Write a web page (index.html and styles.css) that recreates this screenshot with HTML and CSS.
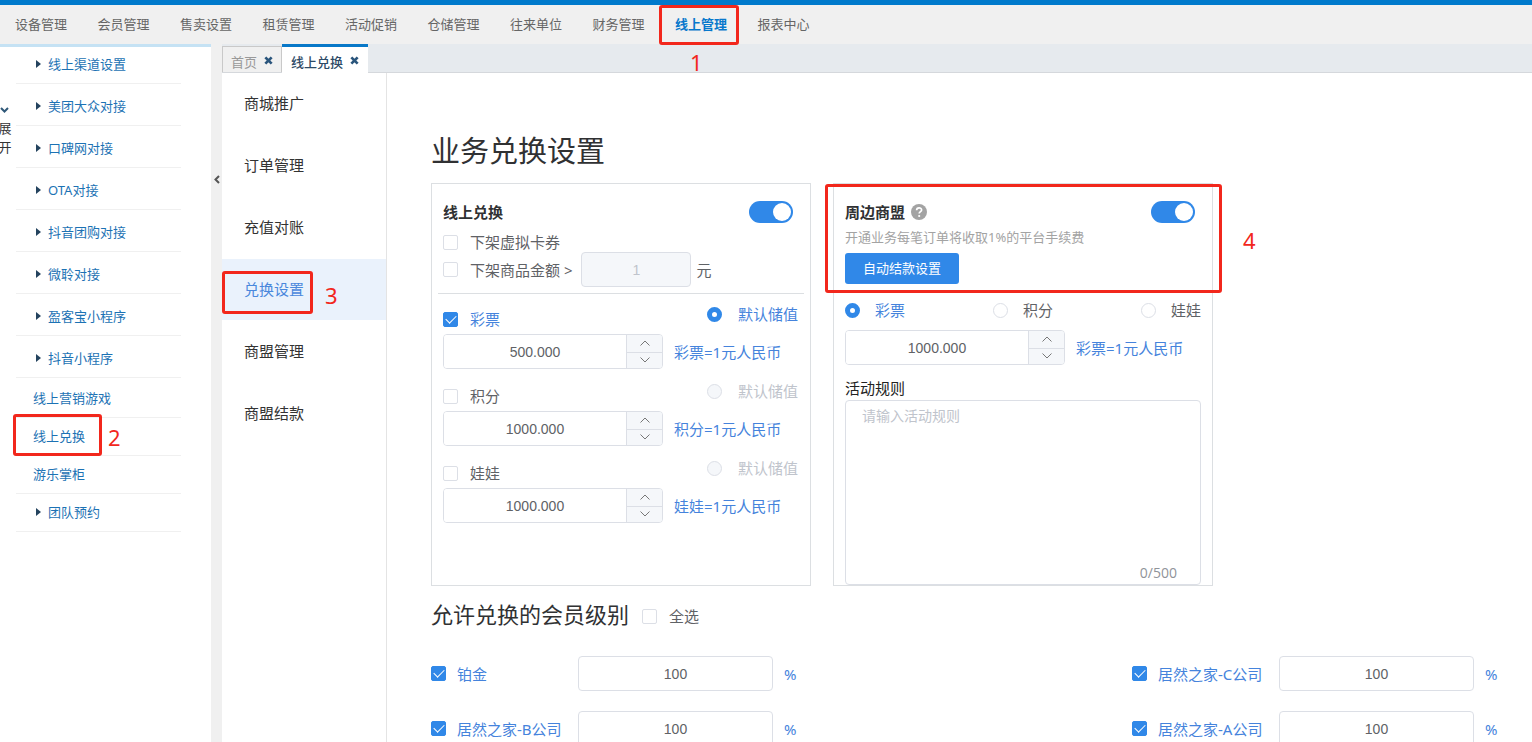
FILE: index.html
```html
<!DOCTYPE html>
<html lang="zh-CN">
<head>
<meta charset="utf-8">
<title>线上兑换</title>
<link rel="stylesheet" href="styles.css">
</head>
<body>
<svg class="defs" aria-hidden="true">
  <symbol id="up" viewBox="0 0 12 8"><path d="M1.5 6.5 6 2l4.500 4.500" fill="none" stroke="currentColor"/></symbol>
  <symbol id="down" viewBox="0 0 12 8"><path d="M1.500 1.500 6 6l4.500-4.500" fill="none" stroke="currentColor"/></symbol>
  <symbol id="close" viewBox="0 0 10 10"><path d="M1.500 1.500l7 7M8.500 1.500l-7 7" stroke="currentColor" stroke-width="3"/></symbol>
</svg>
<header class="topbar">
  <nav class="topnav">
    <a href="#">设备管理</a><a href="#">会员管理</a><a href="#">售卖设置</a><a href="#">租赁管理</a><a href="#">活动促销</a><a href="#">仓储管理</a><a href="#">往来单位</a><a href="#">财务管理</a><a href="#" class="current">线上管理</a><a href="#">报表中心</a>
  </nav>
</header>
<div class="shell">
  <aside class="sidebar">
    <button class="rail" type="button"><svg width="9" height="6" viewBox="0 0 9 6"><path d="M1 1l3.500 3.500L8 1" fill="none" stroke="#2f5878" stroke-width="2"/></svg><span>展<br>开</span></button>
    <ul class="tree">
      <li><a class="branch" href="#">线上渠道设置</a></li>
      <li><a class="branch" href="#">美团大众对接</a></li>
      <li><a class="branch" href="#">口碑网对接</a></li>
      <li><a class="branch" href="#">OTA对接</a></li>
      <li><a class="branch" href="#">抖音团购对接</a></li>
      <li><a class="branch" href="#">微聆对接</a></li>
      <li><a class="branch" href="#">盈客宝小程序</a></li>
      <li><a class="branch" href="#">抖音小程序</a></li>
    </ul>
    <ul class="tree leaves">
      <li><a href="#">线上营销游戏</a></li>
      <li><a href="#">线上兑换</a></li>
      <li><a href="#">游乐掌柜</a></li>
      <li><a class="branch" href="#">团队预约</a></li>
    </ul>
  </aside>
  <button class="splitter" type="button" aria-label="收起侧栏"><svg width="6" height="9" viewBox="0 0 6 9"><path d="M5 1L1.500 4.500 5 8" fill="none" stroke="#555" stroke-width="2"/></svg></button>
  <div class="workspace">
    <div class="tabs">
      <div class="tab"><a href="#">首页</a><button type="button" aria-label="关闭首页"><svg width="9" height="9"><use href="#close"/></svg></button></div>
      <div class="tab active"><a href="#">线上兑换</a><button type="button" aria-label="关闭线上兑换"><svg width="9" height="9"><use href="#close"/></svg></button></div>
    </div>
    <div class="page">
      <nav class="submenu">
        <a href="#">商城推广</a><a href="#">订单管理</a><a href="#">充值对账</a><a href="#" class="current">兑换设置</a><a href="#">商盟管理</a><a href="#">商盟结款</a>
      </nav>
      <main class="content">
        <h1>业务兑换设置</h1>
        <div class="cards">
          <section class="card">
            <div class="card-head"><h2>线上兑换</h2><input class="switch" type="checkbox" checked aria-label="启用线上兑换"></div>
            <label class="option"><input class="check" type="checkbox">下架虚拟卡券</label>
            <div class="amount"><label class="option"><input class="check" type="checkbox">下架商品金额 &gt;</label><input class="field" type="text" value="1" disabled aria-label="商品金额"><span>元</span></div>
            <hr>
            <div class="rate">
              <div class="rate-head"><label class="option on"><input class="check" type="checkbox" checked>彩票</label><label class="default on"><input class="dot" type="radio" name="store" checked>默认储值</label></div>
              <div class="rate-row"><div class="number"><input type="text" value="500.000" aria-label="彩票比例"><button type="button" aria-label="增加"><svg width="12" height="8"><use href="#up"/></svg></button><button type="button" aria-label="减少"><svg width="12" height="8"><use href="#down"/></svg></button></div><span>彩票=1元人民币</span></div>
            </div>
            <div class="rate">
              <div class="rate-head"><label class="option"><input class="check" type="checkbox">积分</label><label class="default off"><input class="dot" type="radio" name="store" disabled>默认储值</label></div>
              <div class="rate-row"><div class="number"><input type="text" value="1000.000" aria-label="积分比例"><button type="button" aria-label="增加"><svg width="12" height="8"><use href="#up"/></svg></button><button type="button" aria-label="减少"><svg width="12" height="8"><use href="#down"/></svg></button></div><span>积分=1元人民币</span></div>
            </div>
            <div class="rate">
              <div class="rate-head"><label class="option"><input class="check" type="checkbox">娃娃</label><label class="default off"><input class="dot" type="radio" name="store" disabled>默认储值</label></div>
              <div class="rate-row"><div class="number"><input type="text" value="1000.000" aria-label="娃娃比例"><button type="button" aria-label="增加"><svg width="12" height="8"><use href="#up"/></svg></button><button type="button" aria-label="减少"><svg width="12" height="8"><use href="#down"/></svg></button></div><span>娃娃=1元人民币</span></div>
            </div>
          </section>
          <section class="card union">
            <div class="card-head"><h2>周边商盟</h2><svg class="help" width="16" height="16" viewBox="0 0 16 16"><circle cx="8" cy="8" r="8" fill="#a3a3a3"/><path d="M5.600 6.300c0-3.300 5-3.100 5-.4 0 1.700-2.400 1.700-2.400 3.700" fill="none" stroke="#fff" stroke-width="1.700"/><circle cx="8.200" cy="12" r="1.100" fill="#fff"/></svg><input class="switch" type="checkbox" checked aria-label="启用周边商盟"></div>
            <p class="hint">开通业务每笔订单将收取1%的平台手续费</p>
            <button class="primary" type="button">自动结款设置</button>
            <div class="kinds">
              <label class="on"><input class="dot" type="radio" name="kind" checked>彩票</label>
              <label><input class="dot" type="radio" name="kind">积分</label>
              <label><input class="dot" type="radio" name="kind">娃娃</label>
            </div>
            <div class="rate-row"><div class="number"><input type="text" value="1000.000" aria-label="商盟比例"><button type="button" aria-label="增加"><svg width="12" height="8"><use href="#up"/></svg></button><button type="button" aria-label="减少"><svg width="12" height="8"><use href="#down"/></svg></button></div><span>彩票=1元人民币</span></div>
            <label class="rules-label" for="rules">活动规则</label>
            <div class="rules"><textarea id="rules" placeholder="请输入活动规则"></textarea><span class="count">0/500</span></div>
          </section>
        </div>
        <div class="levels-head"><h2>允许兑换的会员级别</h2><label class="option"><input class="check" type="checkbox">全选</label></div>
        <div class="levels">
          <div class="level"><label class="option on"><input class="check" type="checkbox" checked>铂金</label><input class="field" type="text" value="100" aria-label="铂金比例"><span>%</span></div>
          <div class="level"><label class="option on"><input class="check" type="checkbox" checked>居然之家-C公司</label><input class="field" type="text" value="100" aria-label="C公司比例"><span>%</span></div>
          <div class="level"><label class="option on"><input class="check" type="checkbox" checked>居然之家-B公司</label><input class="field" type="text" value="100" aria-label="B公司比例"><span>%</span></div>
          <div class="level"><label class="option on"><input class="check" type="checkbox" checked>居然之家-A公司</label><input class="field" type="text" value="100" aria-label="A公司比例"><span>%</span></div>
        </div>
      </main>
    </div>
  </div>
</div>
<div class="mark mark-1"></div><span class="step step-1">1</span>
<div class="mark mark-2"></div><span class="step step-2">2</span>
<div class="mark mark-3"></div><span class="step step-3">3</span>
<div class="mark mark-4"></div><span class="step step-4">4</span>
</body>
</html>
```
FILE: styles.css
```css
* { box-sizing: border-box; }
body {
  margin: 0;
  height: 100vh;
  display: flex;
  flex-direction: column;
  overflow: hidden;
  position: relative;
  background: #fff;
  color: #5f6266;
  font: 15px/20px "Noto Sans", "Noto Sans CJK SC", sans-serif;
}
a { color: inherit; text-decoration: none; }
h1, h2, p, ul { margin: 0; padding: 0; font-weight: 400; }
ul { list-style: none; }
button { border: 0; padding: 0; background: none; font: inherit; color: inherit; }
.defs { position: absolute; width: 0; height: 0; }

.topbar { border-top: 5px solid #007acc; background: #f0f0f0; }
.topnav { display: grid; grid-template-columns: repeat(10, 1fr); max-width: 825px; line-height: 39px; font-size: 13px; color: #666; }
.topnav a { padding-left: 15px; white-space: nowrap; }
.topnav .current { color: #0878cc; font-weight: 700; }

.shell { flex: 1; min-height: 0; display: flex; }
.sidebar { position: relative; flex: 0 0 211px; border-top: 3px solid #c5e2f4; padding: 0 30px 0 16px; font-size: 13px; color: #1c72b4; }
.tree li { padding-top: 5px; border-bottom: 1px solid #f0f0f0; }
.tree:not(.leaves) li:first-child { padding-top: 0; }
.tree a { display: flex; align-items: center; line-height: 34px; padding: 0 0 2px 17px; }
.tree .branch { padding-left: 20px; gap: 7px; }
.tree .branch::before { content: ""; border: solid transparent; border-width: 4px 0 4px 5px; border-left-color: #24435e; }
.leaves li { padding-top: 1px; }
.leaves li:first-child { padding-top: 3px; }
.rail { position: absolute; left: -2px; top: 60px; width: 14px; color: #333; font-size: 13px; line-height: 19px; }
.rail svg { display: block; margin: 0 0 6px 2px; }
.splitter { flex: 0 0 11px; padding-bottom: 430px; background: #f0f0f0; }

.workspace { flex: 1; min-width: 0; display: flex; flex-direction: column; }
.tabs { display: flex; height: 29px; background: #e6eaee; border-bottom: 1px solid #d5d8dc; font-size: 13px; }
.tab { display: flex; align-items: center; gap: 7px; padding: 5px 8px 0; margin-top: 2px; border: 1px solid #c9c9c9; border-bottom: 0; background: #f0f0f0; color: #999; }
.tab button { display: flex; color: #2a557c; padding-bottom: 3px; }
.tab.active { height: 29px; margin-top: 0; padding: 3px 9px 0; border: 0; border-top: 3px solid #0878c8; background: #fff; color: #2d4a66; font-weight: 500; }
.page { flex: 1; min-height: 0; display: flex; }
.submenu { flex: 0 0 165px; display: flex; flex-direction: column; gap: 1px; border-right: 1px solid #e4e4e4; color: #333; line-height: 61px; }
.submenu a { padding-left: 22px; }
.submenu .current { background: #eaf2fc; color: #4a88dc; }

.content { flex: 1; min-width: 0; overflow: hidden; padding: 58px 32px 0 44px; }
h1 { font-size: 29px; line-height: 40px; color: #303133; }
.cards { display: flex; gap: 22px; margin-top: 12px; }
.card { flex: 0 1 380px; min-height: 403px; border: 1px solid #dcdfe2; padding: 17px 11px 0; }
.card-head { display: flex; align-items: center; gap: 6px; height: 22px; margin-right: 6px; }
.card-head h2 { font-size: 15px; font-weight: 700; color: #303133; }
.option { display: flex; align-items: center; gap: 12px; white-space: nowrap; }
.card > .option { margin-top: 9px; }
.on, .rate-row { color: #4583dc; }
.off { color: #c0c4cc; }

.check, .dot, .switch { appearance: none; flex: none; margin: 0; }
.check { width: 15px; height: 15px; border: 1px solid #dcdfe6; border-radius: 2px; background: #fff; }
.check:checked { background: #3088e8; border-color: #3088e8; display: grid; place-items: center; }
.check:checked::after { content: ""; width: 9px; height: 5px; margin-bottom: 3px; border: solid #fff; border-width: 0 0 1px 1px; transform: rotate(-45deg); }
.dot { width: 15px; height: 15px; border: 1px solid #dcdfe6; border-radius: 50%; background: #fff; }
.dot:checked { border: 5px solid #3088e8; }
.dot:disabled { background: #f5f7fa; }
.switch { width: 44px; height: 22px; margin-left: auto; padding: 2px; border-radius: 11px; background: #3088e8; display: flex; justify-content: flex-end; }
.switch::after { content: ""; width: 18px; height: 18px; border-radius: 50%; background: #fff; }
.field { width: 100%; min-width: 0; height: 35px; border: 1px solid #dcdfe6; border-radius: 4px; background: #fff; text-align: center; font: 14px "Liberation Sans", sans-serif; color: #606266; }
.field:disabled { background: #f5f7fa; color: #c0c4cc; }
.amount { display: flex; align-items: center; gap: 5px; }
.amount .option { margin-right: 4px; }
.amount .field { width: 110px; }
hr { height: 1px; margin: 6px -5px 8px; border: 0; background: #dcdfe2; }
.rate { margin-bottom: 10px; }
.rate-head { display: flex; justify-content: space-between; height: 32px; padding-top: 2px; }
.rate-head .option { height: 30px; }
.default { display: flex; align-items: center; gap: 16px; height: 20px; margin-right: 1px; }
.rate-row { display: flex; align-items: center; gap: 11px; white-space: nowrap; }
.number { display: grid; grid-template: 1fr 1fr / 1fr 36px; width: 220px; height: 35px; border: 1px solid #dcdfe6; border-radius: 4px; overflow: hidden; }
.number input { grid-row: 1 / 3; width: 100%; min-width: 0; border: 0; padding: 0; text-align: center; font: 14px "Liberation Sans", sans-serif; color: #606266; }
.number button { display: grid; place-items: center; background: #f5f7fa; border-left: 1px solid #dcdfe6; color: #777; }
.number button + button { border-top: 1px solid #dcdfe6; }

.union { display: flex; flex-direction: column; align-items: stretch; }
.hint { margin-top: 4px; font-size: 13px; color: #a3a3a3; }
.primary { align-self: flex-start; margin-top: 6px; padding: 0 18px; border-radius: 3px; background: #3088e8; color: #fff; font-size: 13px; line-height: 31px; }
.kinds { display: flex; justify-content: space-between; margin: 16px 0 10px; }
.kinds label { display: flex; align-items: center; gap: 15px; }
.rules-label { margin-top: 13px; color: #222; }
.rules { position: relative; flex: 1; display: flex; margin-top: 2px; }
.rules textarea { width: 100%; resize: none; border: 1px solid #dcdfe6; border-radius: 4px; padding: 5px 16px; font: 14px/20px "Noto Sans", "Noto Sans CJK SC", sans-serif; }
.rules textarea::placeholder { color: #c0c4cc; }
.count { position: absolute; right: 24px; bottom: 2px; font: 14px/20px "Open Sans", sans-serif; color: #909399; }

.levels-head { display: flex; align-items: center; gap: 13px; margin-top: 12px; }
.levels-head h2 { font-size: 22px; line-height: 32px; color: #303133; }
.levels-head .option { padding-top: 4px; }
.levels { display: grid; grid-template-columns: repeat(2, 368px); justify-content: space-between; row-gap: 20px; margin-top: 26px; }
.level { display: grid; grid-template-columns: 136px 195px 1fr; gap: 11px; align-items: center; color: #4583dc; }
.level .option { gap: 11px; }

.mark { position: absolute; border: 3px solid #f2271c; border-radius: 3px; pointer-events: none; }
.mark-1 { left: 659px; top: 5px; width: 80px; height: 40px; }
.mark-2 { left: 13px; top: 414px; width: 89px; height: 42px; }
.mark-3 { left: 222px; top: 271px; width: 91px; height: 43px; }
.mark-4 { left: 825px; top: 184px; width: 397px; height: 109px; }
.step { position: absolute; font: 22px/28px "Noto Sans", sans-serif; color: #f2271c; }
.step-1 { left: 690px; top: 48px; }
.step-2 { left: 108px; top: 423px; }
.step-3 { left: 325px; top: 281px; }
.step-4 { left: 1243px; top: 226px; }
```
